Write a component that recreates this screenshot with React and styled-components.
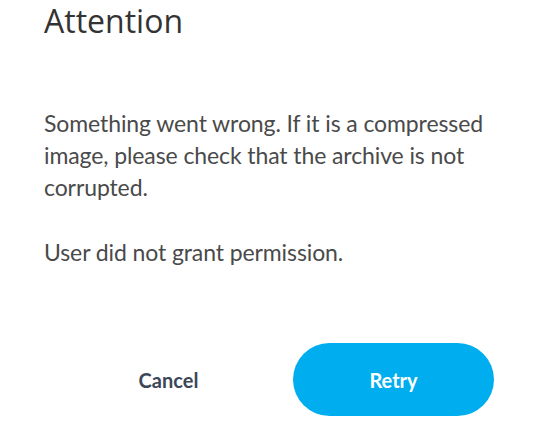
import React from "react";
import styled, { createGlobalStyle } from "styled-components";

const GlobalStyle = createGlobalStyle`
  html, body {
    margin: 0;
    padding: 0;
    background: #ffffff;
  }
`;

export default function App() {
  return (
    <>
      <GlobalStyle />
      <Dialog>
        <Title>Attention</Title>
        <Body>
          <Message>
            Something went wrong. If it is a compressed image, please check
            that the archive is not corrupted.
          </Message>
          <Message>User did not grant permission.</Message>
        </Body>
        <Actions>
          <ActionBTN>Cancel</ActionBTN>
          <ActionBTN primary>Retry</ActionBTN>
        </Actions>
      </Dialog>
    </>
  );
}

const Dialog = styled.div`
  width: 537px;
  height: 421px;
  box-sizing: border-box;
  padding: 0 43px 0 44px;
  display: flex;
  flex-direction: column;
`;

const Title = styled.h1`
  margin: 0;
  padding-top: 1px;
  font-family: "Open Sans", sans-serif;
  font-weight: 400;
  font-size: 32px;
  line-height: 40px;
  color: #333333;
`;

const Body = styled.div`
  margin-top: 66px;
  display: flex;
  flex-direction: column;
  gap: 33px;
`;

const Message = styled.p`
  margin: 0;
  width: 450px;
  font-family: "Lato", sans-serif;
  font-size: 23px;
  letter-spacing: -0.1px;
  line-height: 32px;
  color: #4a4a4a;
`;

const Actions = styled.div`
  margin-top: auto;
  margin-bottom: 5px;
  display: flex;
  justify-content: flex-end;
  gap: 24px;
`;

const ActionBTN = styled.button`
  width: 201px;
  height: 73px;
  border: none;
  border-radius: 37px;
  background-color: ${(p) => (p.primary ? "#00aeef" : "transparent")};
  color: ${(p) => (p.primary ? "#ffffff" : "#3b4756")};
  font-family: "Lato", sans-serif;
  font-weight: 700;
  font-size: 20px;
  cursor: pointer;
`;
